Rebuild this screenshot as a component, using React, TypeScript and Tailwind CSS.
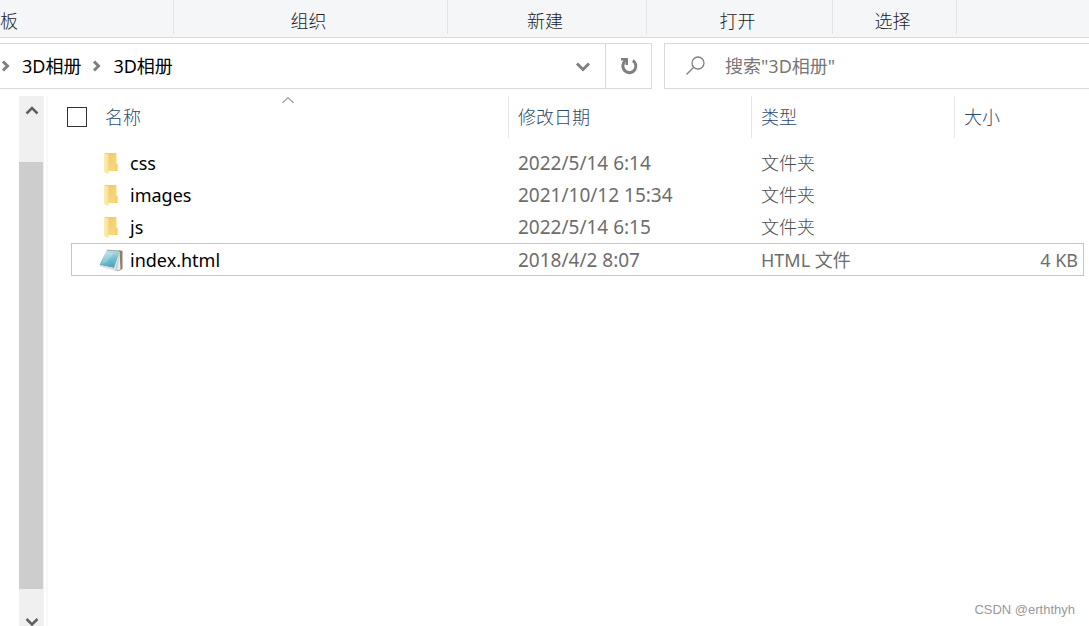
import React, { useState } from "react";

type FileItem = {
  name: string;
  date: string;
  type: string;
  size?: string;
  kind: "folder" | "file";
};

const files: FileItem[] = [
  { name: "css", date: "2022/5/14 6:14", type: "文件夹", kind: "folder" },
  { name: "images", date: "2021/10/12 15:34", type: "文件夹", kind: "folder" },
  { name: "js", date: "2022/5/14 6:15", type: "文件夹", kind: "folder" },
  { name: "index.html", date: "2018/4/2 8:07", type: "HTML 文件", size: "4 KB", kind: "file" },
];

const ribbonGroups = [
  { label: "组织", width: "w-[274px]" },
  { label: "新建", width: "w-[199px]" },
  { label: "打开", width: "w-[186px]" },
  { label: "选择", width: "w-[124px]" },
];

const FolderIcon: React.FC = () => (
  <svg className="w-6 h-6" viewBox="0 0 24 24" aria-hidden="true">
    <defs>
      <linearGradient id="folderBack" x1="0" y1="0" x2="1" y2="1">
        <stop offset="0" stopColor="#eec662" />
        <stop offset="1" stopColor="#fbdc84" />
      </linearGradient>
      <linearGradient id="folderFront" x1="0" y1="0" x2="1" y2="0">
        <stop offset="0" stopColor="#ffebb0" />
        <stop offset="1" stopColor="#fce09a" />
      </linearGradient>
    </defs>
    <path d="M5 2h12.500v10.500h1V20H5z" fill="url(#folderBack)" />
    <path d="M5 2l4.500 1.500v19L8.500 23 5 20.500z" fill="url(#folderFront)" />
    <path d="M16 13h2.500v7H16z" fill="#f5d06f" />
  </svg>
);

const NotepadIcon: React.FC = () => (
  <svg className="w-6 h-6" viewBox="0 0 24 24" aria-hidden="true">
    <defs>
      <linearGradient id="notepadCover" x1="0.4" y1="0" x2="0.6" y2="1">
        <stop offset="0" stopColor="#b9e2ea" />
        <stop offset="0.5" stopColor="#74bfd0" />
        <stop offset="1" stopColor="#4aa2b8" />
      </linearGradient>
    </defs>
    <path d="M20 2l3.500 1v18l-3 1.500L17 23z" fill="#8d8067" />
    <path d="M20.500 3l1 18.500-5.500 1.500-3-2 6-17z" fill="#e6eaf0" />
    <path d="M20.500 4L18 22.500l-2-.5z" fill="#c3cad3" />
    <path d="M7.500 2.500L20.500 4l-5.500 16L.5 17z" fill="url(#notepadCover)" />
    <path d="M7 4l8 1-8 10-5 1z" fill="#ffffff" opacity="0.2" />
    <path d="M.5 17L15 20l2 3L1 18.500z" fill="#d7dde2" />
    <path d="M8 1.500l13 1-.5 1.500-13-1.500z" fill="#a5a8a8" />
  </svg>
);

const CrumbArrow: React.FC = () => (
  <svg className="w-3 h-4 text-[#7f7f7f]" viewBox="0 0 12 16" fill="none" stroke="currentColor" strokeWidth={3} aria-hidden="true">
    <path d="M3 3.500L7.500 8 3 12.500" />
  </svg>
);

const Ribbon: React.FC = () => (
  <div className="flex h-[38px] border-b border-[#d9dadb] bg-[#f4f6f8] text-[#222222] overflow-hidden">
    <div className="w-[174px] shrink-0 h-[34px] pt-[9px] border-r border-[#e1e3e5] leading-6">板</div>
    {ribbonGroups.map((group) => (
      <div
        key={group.label}
        className={`${group.width} shrink-0 h-[34px] pt-[9px] pr-1 border-r border-[#e1e3e5] leading-6 text-center`}
      >
        {group.label}
      </div>
    ))}
  </div>
);

const AddressBar: React.FC = () => {
  const [query, setQuery] = useState("");

  return (
    <div className="flex gap-3 pt-[5px] h-[51px]">
      {/* Path */}
      <nav className="flex flex-1 min-w-0 border border-l-0 border-[#d9d9d9] text-black" aria-label="路径">
        <div className="flex flex-1 items-center gap-[10px] whitespace-nowrap">
          <CrumbArrow />
          <button className="font-normal">3D相册</button>
          <CrumbArrow />
          <button className="font-normal">3D相册</button>
        </div>
        <button className="w-11 flex items-center justify-center text-[#7f7f7f]" aria-label="历史记录">
          <svg className="w-4 h-4" viewBox="0 0 16 16" fill="none" stroke="currentColor" strokeWidth={3}>
            <path d="M2 5.500L8 11.500l6-6" />
          </svg>
        </button>
        <button className="w-[46px] flex items-center justify-center border-l border-[#d9d9d9] text-[#7f7f7f]" aria-label="刷新">
          <svg className="w-5 h-5" viewBox="0 0 20 20" fill="none">
            <path d="M13.800 4.600A6.500 6.500 0 1 1 5 6.500" stroke="currentColor" strokeWidth={3} />
            <path d="M2 2h7v7H6.500V6L5 8 3 6.500 4.500 4.500H2z" fill="currentColor" />
          </svg>
        </button>
      </nav>

      {/* Search */}
      <label className="w-[425px] shrink-0 flex items-center border border-r-0 border-[#d9d9d9] pl-5">
        <svg className="w-5 h-5 text-[#808080]" viewBox="0 0 20 20" fill="none" stroke="currentColor" strokeWidth={1.3} aria-hidden="true">
          <circle cx="13" cy="7" r="6" />
          <path d="M8.700 11.300L1.500 18.500" />
        </svg>
        <input
          type="text"
          value={query}
          onChange={(e) => setQuery(e.target.value)}
          placeholder={'搜索"3D相册"'}
          aria-label="搜索"
          className="flex-1 min-w-0 ml-5 outline-none bg-transparent font-normal placeholder:text-[#777777]"
        />
      </label>
    </div>
  );
};

const Scrollbar: React.FC = () => (
  <div className="w-[25px] shrink-0 mt-[7px] flex flex-col bg-[#f0f0f0] text-[#606060]">
    <button className="w-full h-[66px] flex justify-center pt-[7px]" aria-label="向上滚动">
      <svg className="w-4 h-4" viewBox="0 0 16 16" fill="none" stroke="currentColor" strokeWidth={2.5}>
        <path d="M2.500 10.500L8 5l5.500 5.500" />
      </svg>
    </button>
    <div className="w-6 flex-1 bg-[#cdcdcd]" />
    <button className="w-full h-[37px] flex items-end justify-center overflow-hidden" aria-label="向下滚动">
      <svg className="w-4 h-3" viewBox="0 0 16 12" fill="none" stroke="currentColor" strokeWidth={2.5}>
        <path d="M2.500 5L8 10.500 13.500 5" />
      </svg>
    </button>
  </div>
);

const FileTable: React.FC = () => {
  const [allChecked, setAllChecked] = useState(false);

  return (
    <table className="w-full table-fixed border-separate border-spacing-0 text-left">
      <colgroup>
        <col className="w-1" />
        <col />
        <col className="w-[243px]" />
        <col className="w-[203px]" />
        <col className="w-[129px]" />
      </colgroup>
      <thead className="text-[#2f4a6b]">
        <tr>
          <th colSpan={2} className="relative p-0 pb-[9px] font-light">
            <div className="flex items-center h-[42px] border-r border-[#e5e5e5]">
              <input
                type="checkbox"
                aria-label="全选"
                checked={allChecked}
                onChange={() => setAllChecked(!allChecked)}
                className="appearance-none w-5 h-5 mr-[18px] border border-[#333333] checked:bg-[#0078d7]"
              />
              名称
            </div>
            <svg
              className="absolute top-0 left-1/2 -translate-x-1/2 w-3 h-2 text-[#5a5a5a]"
              viewBox="0 0 12 8"
              fill="none"
              stroke="currentColor"
              aria-hidden="true"
            >
              <path d="M.5 7L6 1.500 11.500 7" />
            </svg>
          </th>
          <th className="p-0 pb-[9px] font-light">
            <div className="flex items-center h-[42px] pl-[9px] border-r border-[#e5e5e5]">修改日期</div>
          </th>
          <th className="p-0 pb-[9px] font-light">
            <div className="flex items-center h-[42px] pl-[9px] border-r border-[#e5e5e5]">类型</div>
          </th>
          <th className="p-0 pb-[9px] font-light">
            <div className="flex items-center h-[42px] pl-[9px]">大小</div>
          </th>
        </tr>
      </thead>
      <tbody className="text-[#6d6d6d]">
        {files.map((file) => {
          const focused = file.kind === "file";
          // The focused row gets a frame
          const frame = focused ? "border-y border-[#99d1ff]" : "";
          return (
            <tr key={file.name} className={focused ? "h-[33px]" : "h-8"}>
              <td className="p-0" />
              <td className={`p-0 ${frame} ${focused ? "border-l pl-[27px]" : "pl-7"}`}>
                <div className="flex items-center gap-[7px] h-[30px] text-black font-normal">
                  {focused ? <NotepadIcon /> : <FolderIcon />}
                  {file.name}
                </div>
              </td>
              <td className={`p-0 pl-[9px] text-[19px] font-normal ${frame}`}>{file.date}</td>
              <td className={`p-0 pl-[9px] ${focused ? "font-normal" : "text-[#4d4d4d]"} ${frame}`}>{file.type}</td>
              <td className={`p-0 pr-[5px] text-right font-normal ${frame} ${focused ? "border-r" : ""}`}>
                {file.size}
              </td>
            </tr>
          );
        })}
      </tbody>
    </table>
  );
};

const App: React.FC = () => {
  return (
    <div className="relative min-h-screen flex flex-col bg-white overflow-hidden text-[18px] leading-6 font-light font-['Noto_Sans','Noto_Sans_CJK_SC',sans-serif]">
      <Ribbon />
      <AddressBar />
      <div className="flex flex-1 pl-[19px]">
        <Scrollbar />
        <div className="w-1 shrink-0 mt-[7px] border-r-2 border-[#f8f8f8]" />
        <main className="flex-1 min-w-0 pt-[7px] pl-[19px] pr-[5px]">
          <FileTable />
        </main>
      </div>
      <div className="absolute right-[14px] bottom-2 text-[13px] leading-4 font-normal text-[#999999] font-['Liberation_Sans',sans-serif]">
        CSDN @erththyh
      </div>
    </div>
  );
};

export default App;
